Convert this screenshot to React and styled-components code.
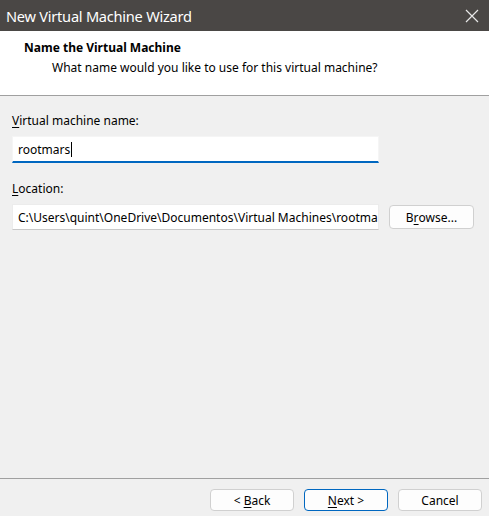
import React from "react";
import styled, { createGlobalStyle } from "styled-components";

const Global = createGlobalStyle`
  html, body { margin: 0; padding: 0; background: #f0f0f0; }
  body { font-family: "Noto Sans", "Open Sans", sans-serif; }
  * { box-sizing: border-box; }
`;

const Window = styled.div`
  width: 489px;
  height: 516px;
  display: flex;
  flex-direction: column;
  background: #f0f0f0;
  font-family: "Noto Sans", "Open Sans", sans-serif;
  font-size: 12px;
  color: #000;
  overflow: hidden;
`;

const TitleBar = styled.div`
  height: 31px;
  flex: none;
  background: #4a4745;
  display: flex;
  align-items: center;
  justify-content: space-between;
  padding: 0 10px 0 6px;
  color: #ffffff;
  font-size: 14.6px;
  letter-spacing: -0.25px;
`;

const CloseIcon = styled.svg`
  width: 14px;
  height: 14px;
  display: block;
`;

const Header = styled.div`
  height: 65px;
  flex: none;
  background: #ffffff;
  border-bottom: 1px solid #a0a0a0;
  padding: 9px 0 0 24px;
  display: flex;
  flex-direction: column;
  gap: 4px;
`;

const HeaderTitle = styled.div`
  font-weight: 700;
  font-size: 12px;
  line-height: 16px;
`;

const HeaderSub = styled.div`
  padding-left: 28px;
  line-height: 16px;
`;

const Body = styled.div`
  flex: 1;
  padding: 17px 0 0 12px;
  display: flex;
  flex-direction: column;
`;

const Label = styled.div`
  line-height: 16px;
  margin-bottom: ${(p) => p.$mb}px;
`;

const Row = styled.div`
  display: flex;
  align-items: center;
  gap: 10px;
`;

const TextField = styled.div`
  width: 367px;
  height: ${(p) => (p.$focused ? 27 : 26)}px;
  background: #ffffff;
  border: 1px solid ${(p) => (p.$focused ? "#f5f5f5" : "#ececec")};
  border-bottom: ${(p) => (p.$focused ? "2px solid #0067c0" : "1px solid #c8c8c8")};
  padding: 0 5px;
  display: flex;
  align-items: center;
  white-space: nowrap;
  overflow: hidden;
  margin-bottom: ${(p) => p.$mb || 0}px;
`;

const Caret = styled.span`
  display: inline-block;
  width: 1px;
  height: 15px;
  background: #000;
  margin-left: 1px;
  vertical-align: middle;
`;

const Button = styled.button`
  width: ${(p) => p.$w || 84}px;
  height: ${(p) => p.$h || 22}px;
  background: #fdfdfd;
  border: 1px solid ${(p) => (p.$primary ? "#0067c0" : "#d0d0d0")};
  border-radius: 4px;
  font-family: inherit;
  font-size: 12px;
  color: #000;
  padding: 0;
  display: flex;
  align-items: center;
  justify-content: center;
`;

const U = styled.span`
  text-decoration: underline;
  text-underline-offset: 2px;
`;

const Footer = styled.div`
  flex: none;
  height: 38px;
  border-top: 1px solid #a0a0a0;
  display: flex;
  justify-content: flex-end;
  align-items: flex-start;
  gap: 10px;
  padding: 10px 7px 0 0;
`;

export default function App() {
  return (
    <>
      <Global />
      <Window>
        <TitleBar>
          <span>New Virtual Machine Wizard</span>
          <CloseIcon viewBox="0 0 14 14">
            <path d="M1 1 L13 13 M13 1 L1 13" stroke="#e8e8e8" strokeWidth="1.2" fill="none" />
          </CloseIcon>
        </TitleBar>
        <Header>
          <HeaderTitle>Name the Virtual Machine</HeaderTitle>
          <HeaderSub>What name would you like to use for this virtual machine?</HeaderSub>
        </Header>
        <Body>
          <Label $mb={7}>
            <U>V</U>irtual machine name:
          </Label>
          <TextField $focused $mb={18}>
            rootmars
            <Caret />
          </TextField>
          <Label $mb={7}>
            <U>L</U>ocation:
          </Label>
          <Row>
            <TextField>C:\Users\quint\OneDrive\Documentos\Virtual Machines\rootma</TextField>
            <Button $w={85} $h={24}>
              B<U>r</U>owse...
            </Button>
          </Row>
        </Body>
        <Footer>
          <Button>
            &lt;&nbsp;<U>B</U>ack
          </Button>
          <Button $primary>
            <U>N</U>ext&nbsp;&gt;
          </Button>
          <Button>Cancel</Button>
        </Footer>
      </Window>
    </>
  );
}
